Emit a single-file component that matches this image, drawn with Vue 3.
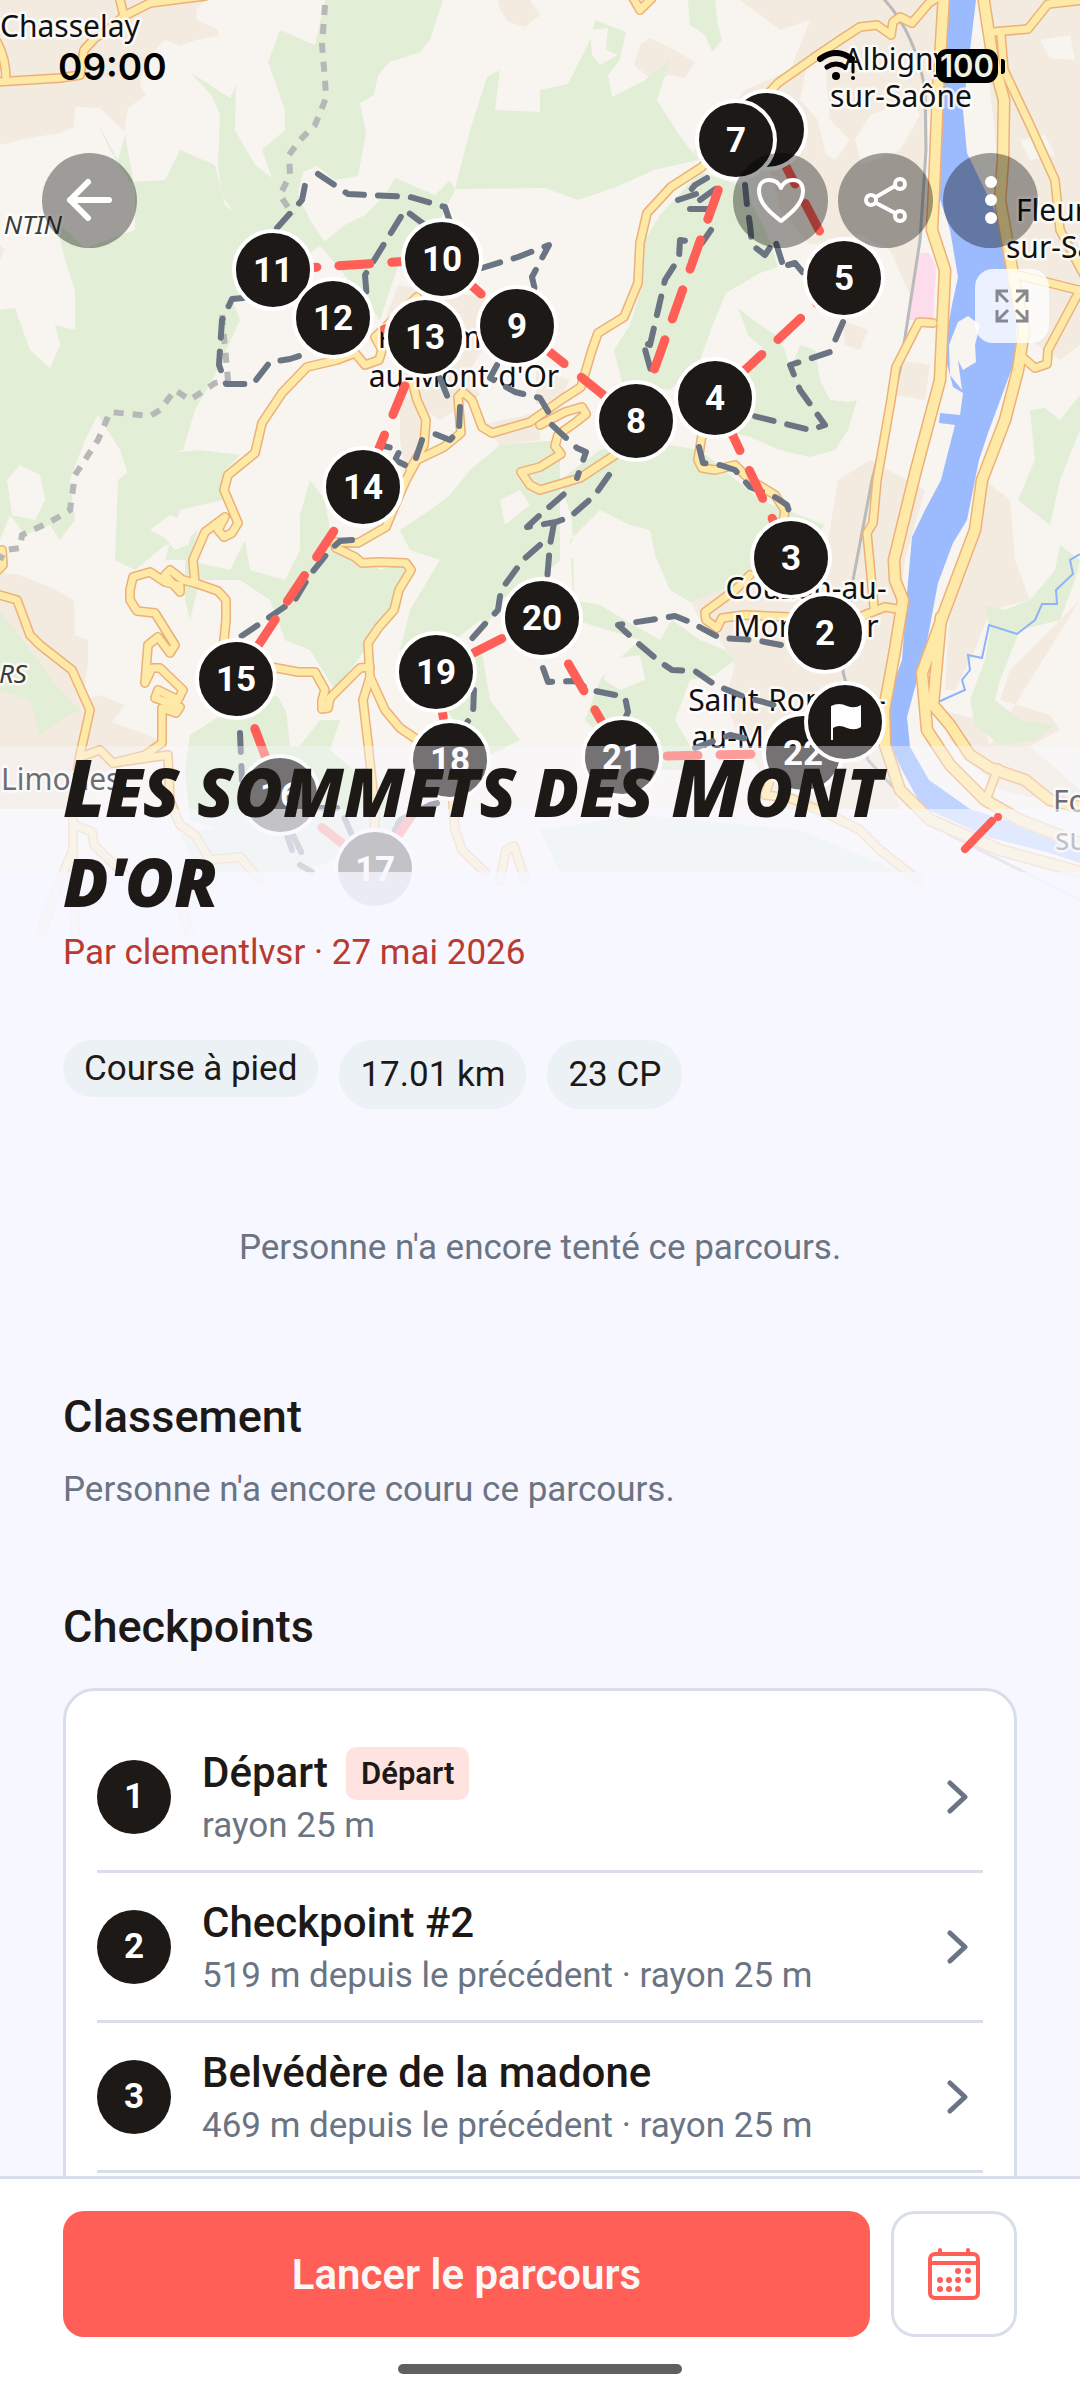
<template>
  <div class="screen">
    <main class="scroll">
      <svg class="map" viewBox="0 0 1080 935" preserveAspectRatio="xMidYMin slice" aria-label="Carte du parcours">
        <rect width="1080" height="935" fill="#f8f5f0" />
        <polygon v-for="(p, i) in urban" :key="'u' + i" :points="p" fill="#f3ebe0" />
        <polygon v-for="(p, i) in clearings" :key="'c' + i" :points="p" fill="#f8f5f0" />
        <polygon v-for="(p, i) in woods" :key="'w' + i" :points="p" fill="#e2eed5" />
        <polygon v-for="(p, i) in glades" :key="'g' + i" :points="p" fill="#f8f5f0" />
        <polygon points="919,253 929,253 936,266 933,320 908,320 914,280" fill="#fddcec" />
        <polygon :points="river" fill="#9cbbff" />
        <polygon points="958,322 968,316 980,325 975,345 976,362 963,370 958,360 962,390 950,375 949,345" fill="#f8f5f0" />
        <path d="M1080 554 L1070 560 L1073 574 L1056 590 L1057 604 L1042 604 L1035 620 L1017 634 L989 625 L982 658 L968 655 L970 670 L962 680 L965 690 L938 702" fill="none" stroke="#8fb2fb" stroke-width="2" />
        <path d="M880 -5 Q915 30 925 90 L926 150 L920 240 L900 370 L872 480 L853 580 L843 672 L868 760 L905 800 L950 835 L1080 900" fill="none" stroke="#b9babb" stroke-width="3" />
        <g fill="none" stroke-linejoin="round" stroke-linecap="round">
          <path v-for="(d, i) in roads" :key="'rc' + i" :d="d" stroke="#ecb178" stroke-width="10" />
          <path v-for="(d, i) in mainRoads" :key="'mc' + i" :d="d" stroke="#ecb178" stroke-width="13" />
          <path v-for="(d, i) in roads" :key="'rf' + i" :d="d" stroke="#ffe9a6" stroke-width="7" />
          <path v-for="(d, i) in mainRoads" :key="'mf' + i" :d="d" stroke="#ffe9a6" stroke-width="10" />
        </g>
        <g fill="none" stroke="#b6b7b7" stroke-width="6" stroke-dasharray="10 9">
          <path d="M325 5 L322 45 L325 80 L326 98 L315 125 L300 140 L289 155 L290 175 L280 195 L293 215" />
          <path d="M222 315 L228 380 L215 383 L190 400 L175 390 L160 410 L150 416 L110 412 L98 440 L75 475 L70 510 L50 522 L22 535 L20 548 L5 550 L0 560" />
        </g>

        <g class="labels">
          <text v-for="l in labels" :key="l.text + l.y" :x="l.x" :y="l.y" :text-anchor="l.anchor || 'start'" :class="{ area: l.area }">{{ l.text }}</text>
        </g>

        <g fill="none" stroke="#6b7483" stroke-width="6" stroke-linecap="round" stroke-linejoin="round" stroke-dasharray="19 14">
          <path v-for="(d, i) in trails" :key="'t' + i" :d="d" />
        </g>
        <g stroke="#ff5f57" stroke-width="9" stroke-linecap="round" stroke-dasharray="31 22">
          <line v-for="(l, i) in legs" :key="'l' + i" :x1="l.x1" :y1="l.y1" :x2="l.x2" :y2="l.y2" :stroke-dashoffset="l.offset" />
        </g>

        <g v-for="p in pins" :key="p.id">
          <circle :cx="p.x" :cy="p.y" r="39" fill="#1d1916" stroke="#fff" stroke-width="4" />
          <path v-if="p.id === 'flag'" transform="translate(845 722)" d="M-14 18 V-16 Q-6 -20 2 -16 Q10 -13 16 -17 V5 Q10 9 2 6 Q-6 2 -12 6 V18 Z" fill="#fff" />
          <text v-else class="pin-num" :x="p.x" :y="p.y + 12" text-anchor="middle">{{ p.label }}</text>
        </g>

        <g fill="#f7f7ff">
          <rect y="746" width="1080" height="63" opacity="0.4" />
          <rect y="809" width="1080" height="63" opacity="0.76" />
          <rect y="872" width="1080" height="63" opacity="0.95" />
        </g>
        <path d="M965 849 L992 821" stroke="#ff5f57" stroke-width="8" stroke-linecap="round" />
        <circle cx="998" cy="817" r="4" fill="#ff5f57" />
      </svg>

      <div class="over-map">
        <div class="status">
          <span class="clock">09:00</span>
          <span class="status-right">
            <svg width="42" height="32" viewBox="0 0 42 32" fill="none" stroke="#000" stroke-linecap="round" aria-hidden="true">
              <path d="M3 9 Q19 -3 35 9" stroke-width="6" />
              <path d="M10 17 Q19 11 28 17" stroke-width="5" />
              <circle cx="19" cy="26" r="4" fill="#000" stroke="none" />
              <path d="M36 14 V22" stroke-width="3" />
              <circle cx="36" cy="28" r="2" fill="#000" stroke="none" />
            </svg>
            <span class="battery"><span class="level">100</span><i></i></span>
          </span>
        </div>

        <nav class="nav">
          <button class="round" type="button" aria-label="Retour">
            <svg width="52" height="52" viewBox="0 0 52 52"><path d="M45 25 H6 M24 7 L6 25 L24 43" stroke-width="6" /></svg>
          </button>
          <div class="actions">
            <button class="round" type="button" aria-label="Favori">
              <svg width="52" height="52" viewBox="0 0 52 52"><path d="M26 46 C17 39 4 29 4 16 C4 8 9 5 14 5 C20 5 24 8 26 13 C28 8 32 5 38 5 C43 5 48 8 48 16 C48 29 35 39 26 46 Z" stroke-width="4" /></svg>
            </button>
            <button class="round" type="button" aria-label="Partager">
              <svg width="52" height="52" viewBox="0 0 52 52" stroke-width="4">
                <path d="M16 22 L35 11 M16 28 L35 38" />
                <circle cx="11" cy="25" r="5" /><circle cx="40" cy="9" r="5" /><circle cx="40" cy="41" r="5" />
              </svg>
            </button>
            <button class="round" type="button" aria-label="Plus d'options">
              <svg class="dots" width="52" height="52" viewBox="0 0 52 52">
                <circle cx="26" cy="7" r="6" /><circle cx="26" cy="25" r="6" /><circle cx="26" cy="43" r="6" />
              </svg>
            </button>
          </div>
        </nav>
        <button class="expand" type="button" aria-label="Agrandir la carte">
          <svg width="34" height="34" viewBox="0 0 34 34" fill="none" stroke="#85898f" stroke-width="3">
            <path d="M2 13 V2 H13 M2 2 L13 13 M21 2 H32 V13 M32 2 L21 13 M2 21 V32 H13 M2 32 L13 21 M32 21 V32 H21 M32 32 L21 21" />
          </svg>
        </button>
      </div>

      <div class="content">
        <h1><span>L</span>es sommets des <span>M</span>ont d'or</h1>
        <p class="author">Par clementlvsr · 27 mai 2026</p>

        <div class="chips">
          <span class="chip sport">Course à pied</span>
          <span class="chip">17.01 km</span>
          <span class="chip">23 CP</span>
        </div>

        <p class="empty">Personne n'a encore tenté ce parcours.</p>

        <section class="block">
          <h2>Classement</h2>
          <p class="muted">Personne n'a encore couru ce parcours.</p>
        </section>

        <section class="block">
          <h2>Checkpoints</h2>
          <div class="card">
            <a v-for="(cp, i) in checkpoints" :key="cp.name" class="cp" href="#">
              <span class="num">{{ i + 1 }}</span>
              <span class="info">
                <span class="name">{{ cp.name }}<span v-if="cp.badge" class="badge">{{ cp.badge }}</span></span>
                <span class="detail">{{ cp.detail }}</span>
              </span>
              <svg class="chevron" width="36" height="36" viewBox="0 0 36 36" aria-hidden="true"><path d="M3 4 L18 18 L3 32" /></svg>
            </a>
          </div>
        </section>
      </div>
    </main>

    <footer class="bottom">
      <div class="cta">
        <button class="start" type="button">Lancer le parcours</button>
        <button class="calendar" type="button" aria-label="Planifier">
          <svg width="54" height="54" viewBox="0 0 54 54" fill="none" stroke="#ff5f57" stroke-width="4" stroke-linecap="round">
            <rect x="3" y="7" width="48" height="44" rx="5" />
            <path d="M3 16 H51 M13 3 V6 M41 3 V6" />
            <g fill="#ff5f57" stroke="none">
              <circle v-for="(d, i) in calendarDots" :key="i" :cx="d[0]" :cy="d[1]" r="3" />
            </g>
          </svg>
        </button>
      </div>
      <div class="handle"></div>
    </footer>
  </div>
</template>

<script setup>
import { ref, computed } from 'vue';

const checkpoints = ref([
  { name: 'Départ', badge: 'Départ', detail: 'rayon 25 m' },
  { name: 'Checkpoint #2', detail: '519 m depuis le précédent · rayon 25 m' },
  { name: 'Belvédère de la madone', detail: '469 m depuis le précédent · rayon 25 m' }
]);

const calendarDots = [[31, 24], [41, 24], [13, 33], [22, 33], [31, 33], [41, 33], [13, 42], [22, 42], [31, 42]];

// drawing order matters: later pins cover earlier ones
const pins = [
  { id: 6, label: '', x: 767, y: 130 },
  { id: 7, label: '7', x: 736, y: 140 },
  { id: 5, label: '5', x: 844, y: 278 },
  { id: 4, label: '4', x: 715, y: 398 },
  { id: 8, label: '8', x: 636, y: 421 },
  { id: 3, label: '3', x: 791, y: 558 },
  { id: 2, label: '2', x: 825, y: 633 },
  { id: 9, label: '9', x: 517, y: 326 },
  { id: 10, label: '10', x: 442, y: 259 },
  { id: 11, label: '11', x: 273, y: 270 },
  { id: 12, label: '12', x: 333, y: 318 },
  { id: 13, label: '13', x: 425, y: 337 },
  { id: 14, label: '14', x: 363, y: 487 },
  { id: 15, label: '15', x: 236, y: 679 },
  { id: 16, label: '16', x: 280, y: 795 },
  { id: 17, label: '17', x: 375, y: 869 },
  { id: 18, label: '18', x: 450, y: 760 },
  { id: 19, label: '19', x: 436, y: 672 },
  { id: 20, label: '20', x: 542, y: 618 },
  { id: 21, label: '21', x: 622, y: 757 },
  { id: 22, label: '22', x: 803, y: 753 },
  { id: 'flag', label: '', x: 845, y: 722 }
];

// [from, to, dash offset]
const links = [
  [3, 4, 40], [4, 5, 20], [5, 6, 0], [7, 8, 0], [8, 9, 14], [9, 10, 5], [11, 10, 40], [12, 13, 0], [13, 14, 0],
  [14, 15, 0], [15, 16, 0], [16, 17, 0], [17, 18, 10], [18, 19, 10], [19, 20, 10], [20, 21, 0], [21, 22, 8]
];

const legs = computed(() => links.map(([a, b, offset]) => {
  const from = pins.find(p => p.id === a);
  const to = pins.find(p => p.id === b);
  return { x1: from.x, y1: from.y, x2: to.x, y2: to.y, offset };
}));

const labels = [
  { text: 'Chasselay', x: 0, y: 37 },
  { text: 'NTIN', x: 62, y: 234, anchor: 'end', area: true },
  { text: 'RS', x: 27, y: 683, anchor: 'end', area: true },
  { text: 'Limonest', x: 1, y: 790 },
  { text: 'Poleymieux-', x: 464, y: 348, anchor: 'middle' },
  { text: "au-Mont-d'Or", x: 464, y: 387, anchor: 'middle' },
  { text: 'Albigny-', x: 901, y: 70, anchor: 'middle' },
  { text: 'sur-Saône', x: 901, y: 107, anchor: 'middle' },
  { text: 'Fleurieu-', x: 1016, y: 221 },
  { text: 'sur-Saône', x: 1006, y: 258 },
  { text: 'Couzon-au-', x: 806, y: 599, anchor: 'middle' },
  { text: "Mont-d'Or", x: 806, y: 637, anchor: 'middle' },
  { text: 'Saint-Romain-', x: 787, y: 711, anchor: 'middle' },
  { text: "au-Mont-d'Or", x: 787, y: 748, anchor: 'middle' },
  { text: 'Fontaines-', x: 1053, y: 812 },
  { text: 'sur-Saône', x: 1055, y: 850 }
];

const urban = [
  '0,0 205,0 196,10 197,20 218,30 218,36 196,40 180,46 165,40 145,60 140,85 146,95 128,108 124,131 100,108 75,107 74,127 60,133 30,138 0,145',
  '498,0 530,0 540,15 525,27 508,22 500,10',
  '640,45 650,38 675,50 695,62 685,78 668,75 655,82 634,65',
  '740,0 940,0 928,120 925,220 912,300 890,250 860,235 810,245 780,210 770,170 700,160 690,155 745,90 790,70 810,20 780,30',
  '985,0 1080,0 1080,345 1060,360 1030,340 1015,260 1000,180 990,90',
  '398,285 440,290 500,300 495,330 470,370 480,395 440,420 410,400 395,350 385,320',
  '400,390 420,410 428,440 405,470 400,440',
  '480,425 540,412 540,440 500,445',
  '536,370 570,380 560,398 536,405',
  '842,320 868,330 860,350 845,345',
  '0,572 20,575 52,588 74,600 75,635 88,640 88,665 82,700 100,695 125,705 112,722 160,740 150,757 80,780 70,809 0,809',
  '838,480 870,460 925,490 905,560 895,640 880,746 900,809 780,809 760,770 740,740 725,700 735,665 720,640 700,620 690,600 745,580 790,600 820,590',
  '900,360 930,365 925,400 895,395',
  '985,480 1010,500 1015,560 1030,600 990,610 975,650 955,690 945,690 950,600 970,530',
  '1080,600 1040,640 1010,670 1000,700 1050,715 1060,730 1030,746 1080,790 1080,809 1000,790 950,740 940,710 980,720 990,745',
  '0,245 5,250 0,260'
];

const clearings = [
  '808,60 825,62 830,120 850,140 835,160 820,150 826,155 818,120 800,100',
  '870,115 910,100 920,115 900,150 862,165 855,140',
  '1020,140 1045,135 1055,155 1030,160',
  '1040,40 1070,35 1075,60 1050,58',
  '745,470 790,450 838,470 830,530 790,520'
];

const woods = [
  '325,0 443,0 430,40 420,52 390,62 378,75 374,95 360,103 366,133 358,176 335,180 317,166 303,172 298,195 310,220 330,250 300,240 270,225 240,222 222,195 218,165 220,115 212,96 190,72 230,98 236,85 235,130 255,165 272,178 262,150 285,130 285,110 268,62 280,30 315,45',
  '97,122 110,150 130,182 165,180 180,150 215,165 225,205 245,222 290,225 300,235 320,245 270,290 250,300 232,300 240,320 215,375 195,410 183,450 148,460 130,480 120,450 98,415 85,440 70,480 50,490 0,490 0,310 15,308 30,350 50,368 60,345 55,325 75,330 75,290 65,260 55,220 85,248 135,230 135,190 125,135 118,160',
  '395,178 435,195 450,180 455,190 440,220 400,260 380,320 365,300 320,245 345,225 365,215 385,195',
  '487,77 500,70 495,110 540,112 540,90 568,84 590,40 595,20 626,32 620,60 608,75 612,97 645,80 670,60 657,100 678,133 698,160 654,170 616,187 578,200 545,188 455,189 470,130',
  '688,0 715,0 718,25 722,40 712,52 705,35 690,25',
  '700,172 740,185 752,205 767,233 778,267 760,273 726,293 712,327 700,360 670,390 622,383 614,350 630,325 643,283 645,240 660,215 674,200',
  '738,308 760,325 775,335 785,350 790,370 800,345 815,350 820,380 830,400 848,402 857,400 848,430 835,450 810,457 780,450 750,437 720,430 740,400 750,365 765,350 748,335',
  '560,480 600,450 640,440 700,450 760,500 825,525 812,540 760,545 750,580 720,590 690,602 670,590 655,555 650,530 630,525 600,510 570,540 573,600 600,605 625,620 660,640 672,620 700,640 725,650 735,660 715,675 690,680 675,720 690,746 700,770 660,770 600,735 585,720 600,680 612,665 640,640 575,620 572,520',
  '400,530 430,510 450,495 470,470 500,445 560,440 560,560 540,580 500,600 480,640 490,700 520,740 480,760 440,700 410,690 400,650 410,610 440,560 410,550',
  '310,480 325,500 330,530 345,545 380,570 405,560 400,600 380,620 365,650 335,690 310,650 285,640 270,600 240,580 200,580 190,620 185,600 185,560 230,570 245,540 250,570 285,580 300,550 300,515',
  '118,480 150,455 200,450 240,455 225,470 222,500 180,510 165,560 190,560 198,530 180,545 165,545 135,570 115,560',
  '190,735 230,710 260,690 285,700 290,746 300,746 320,720 340,720 330,750 400,810 390,840 290,850 190,820 185,770',
  '0,460 70,480 75,520 60,540 50,525 25,535 10,515 0,540',
  '0,610 30,650 60,690 80,710 60,720 40,735 30,700 0,690',
  '1030,410 1045,408 1060,420 1080,395 1080,430 1060,480 1050,525 1018,500 1035,460',
  '985,605 1005,610 1030,600 1055,570 1060,545 1080,560 1075,580 1060,620 1020,630 1000,680 995,700 1020,720 1055,725 1035,740 1000,745 975,725 970,700 985,660 990,630',
  '180,835 260,820 380,845 300,872 200,872',
  '540,830 640,815 800,830 900,872 560,872'
];

const glades = [
  '7,480 20,465 40,475 45,500 35,520 12,515',
  '150,530 170,515 195,525 188,545 175,550 165,538',
  '305,430 350,410 360,450 330,470',
  '265,670 300,690 310,715 290,720',
  '590,30 608,28 606,50 618,55 600,65 592,55',
  '500,500 520,490 530,505 505,525',
  '572,540 590,550 580,565 568,555',
  '455,640 480,620 490,630 470,660',
  '608,660 640,655 645,680 620,690 604,680'
];

const river = '949,0 943,43 938,110 936,187 950,230 958,277 952,305 948,327 946,360 953,387 963,393 960,415 940,413 939,423 955,425 941,480 925,510 912,537 907,593 902,660 890,693 889,743 902,770 922,807 988,837 1050,853 1080,863 1080,843 1020,825 970,809 929,780 910,747 907,717 926,647 938,583 953,543 967,520 979,460 988,433 1015,360 1017,317 1012,260 998,217 967,153 963,110 972,33 976,0';

const roads = [
  'M119 -4 L124 16 L150 3 L205 -4',
  'M124 16 L108 30 L95 38 L84 50 L80 75 L60 78 L-4 82 M-3 42 Q6 58 6 80',
  'M940 -4 L929 3 L912 23 L900 17 L893 22 L891 35 L877 25 L860 27 L840 40 L815 57 L778 83 L702 167 L671 187 L647 213 L640 243 L638 283 L624 317 L598 333 L592 350 L581 387 L561 400 L530 422 L492 433 L482 427 L472 400 L463 392 L458 397 L461 433 L444 447 L417 460 L406 480 L396 503 L386 527 L358 543 L334 542 L336 548 L355 557 L362 563 L379 562 L406 563 L411 570 L399 590 L394 610 L379 627 L368 643 L370 677 L363 700 L368 743 L375 810 L374 840',
  'M370 677 L385 710 L400 728 L440 755 L452 790 L455 830 L462 850 L485 872 M500 880 L506 850 L514 846 L525 880',
  'M370 667 L360 668 L330 698 L328 708 L322 709 L322 700 L325 690 L315 672 L298 672 L250 663',
  'M223 650 L226 620 L226 600 L218 591 L195 583 L183 580 L170 570 L165 575 L180 592 L180 586 L165 582 L150 572 L133 577 L130 590 L130 600 L137 611 L155 613 L175 645 L170 653 L158 637 L148 645 L145 683 L152 668 L160 668 L183 690 L178 700 L158 690 L155 698 L180 707 L176 713 L162 708 L162 743 L145 755 L113 763 L100 750 L80 757',
  'M195 583 L193 560 L205 532 L225 517 L218 530 L224 537 L232 533 L238 523 L224 490 L228 475 L255 453 L262 423 L282 393 L307 367 L337 360 L355 353 L365 365 L379 360 L382 350 L375 337 L417 297',
  'M412 380 L417 400 L426 420 L424 445 L410 470',
  'M-4 594 L17 600 L30 635 L40 645 L72 670 L90 710 L80 755 L73 800 L73 850 L60 880',
  'M76 825 L92 832 L94 845 L130 880',
  'M113 763 L168 755 L170 800 L180 825 L195 835 L210 860 L240 857 L260 880',
  'M-4 572 L3 565 L2 550',
  'M540 425 L565 412 L582 407 L586 414 L576 422 L558 435 L555 446 L561 454 L540 467 L521 472 L530 485 L540 490 L580 478 L615 455',
  'M702 435 L698 460 L702 468 L715 470 L735 465 L750 480 L775 495 L785 510 L782 530',
  'M750 575 L735 590 L705 612 L706 620 L717 628 L722 618 L745 615 L790 617',
  'M770 780 L765 795 L790 798 L830 815 L860 830 L880 850 L918 880',
  'M632 -4 L640 10 L652 -2',
  'M862 616 L885 607 L903 610',
  'M933 323 L919 322 L896 367 L891 400 L877 480 L873 523 L867 533 L874 607',
  'M993 32 L1028 29 L1048 4 L1084 0',
  'M1001 35 L1004 70 L1030 125 L1055 180 L1060 230 L1084 275',
  'M1018 275 L1078 290 M1080 290 L1048 350 L1047 364 L1035 368 L1020 355',
  'M998 768 L988 795',
  'M60 880 L40 935 M73 850 L75 935 M130 880 L180 900 L190 935'
];

const mainRoads = [
  'M944 -5 L938 90 L934 190 L932 230 L945 270 L940 380 L916 470 L894 560 L895 580 L903 600 L895 650 L884 710 L885 745 L900 790 L930 820 L1000 850 L1084 873',
  'M983 -5 L993 60 L1004 100 L1003 160 L1000 200 L1014 280 L1024 330 L1018 370 L1005 420 L982 480 L975 530 L945 610 L922 673 L927 730 L950 765 L985 800 L1020 820 L1084 845',
  'M941 617 L938 650 L933 705 L950 725 L970 755 L990 768 L1025 780 L1050 800 L1084 808'
];

const trails = [
  'M277 228 L302 200 L306 180',
  'M318 174 L348 194 L410 197 L445 207 L450 222',
  'M425 225 L405 210 L365 275 L367 300',
  'M243 298 L232 299 L222 320 L219 365 L226 384 L253 384 L270 362 L290 359 L312 352',
  'M482 268 L518 257 L549 245 L532 277 L535 290',
  'M497 365 L490 378 L515 392 L540 398 L549 413 L552 425 L577 448 L586 452 L577 478',
  'M440 378 L448 398 M460 407 L459 430 L450 440 L430 432 M422 440 L416 458 M405 465 L395 460 L400 450 L380 445',
  'M609 475 L595 495 L570 517 L556 522 L527 527 L540 515 L571 488 M554 523 L550 545 L547 580',
  'M540 545 L523 560 L501 590 L498 610 L484 625 L468 643',
  'M352 540 L340 541 L330 550 L310 575 L295 600 L280 610 L255 627 L240 637',
  'M240 733 L241 757 L242 780',
  'M318 808 L340 808 L352 835 M287 835 L292 850 M293 835 L305 860 M300 865 L312 872 M395 830 L400 820 L430 805 L448 800',
  'M474 690 L473 715 L465 725',
  'M543 668 L548 682 L575 681 L590 690 L625 697 L628 712 L622 725 L590 735',
  'M707 178 L695 185 L686 196 M678 200 L702 192 M690 209 L708 209 M700 200 L718 187',
  'M711 230 L702 243 L680 240 L679 258 L665 280 L650 345 L643 342 L652 375',
  'M745 185 L747 205 L750 225 L752 245 L765 255 L775 240 L782 262 M788 265 L795 263 L805 275',
  'M843 322 L830 352 L800 362 L790 365 L800 390 L825 425 L810 430 L750 415',
  'M699 447 L703 463 L720 465 L735 470 L750 487 L775 497 L787 505 L792 520',
  'M781 645 L755 640 L720 638 L690 622 L675 616 L618 625 L640 645 L660 662 L672 670 L695 671 L715 685 L745 697 L785 708',
  'M695 748 L730 735 L756 741'
];
</script>

<style>
body {
  margin: 0;
  background: #f7f7ff;
}
</style>

<style scoped>
.screen {
  display: flex;
  flex-direction: column;
  height: 100vh;
  background: #f7f7ff;
  color: #1d1916;
  font-family: Roboto, sans-serif;
}

.scroll {
  position: relative;
  flex: 1;
  min-height: 0;
  overflow-y: auto;
  scrollbar-width: none;
}

button {
  border: 0;
  padding: 0;
  font-family: inherit;
  cursor: pointer;
}

h1,
h2,
p {
  margin: 0;
}

/* Map background */
.map {
  position: absolute;
  top: 0;
  left: 0;
  width: 100%;
  height: 935px;
}

.labels text {
  font-family: "Noto Sans", sans-serif;
  font-size: 30px;
  fill: #111;
  stroke: #fff;
  stroke-opacity: 0.8;
  stroke-width: 5px;
  stroke-linejoin: round;
  paint-order: stroke;
}

.labels .area {
  font-size: 26px;
  font-style: italic;
  fill: #3c3c3c;
}

.pin-num {
  font-size: 35px;
  font-weight: 700;
  fill: #fff;
}

.over-map {
  position: relative;
  display: flex;
  flex-direction: column;
  height: 746px;
}

.status {
  display: flex;
  justify-content: space-between;
  align-items: center;
  height: 132px;
  padding: 0 75px 0 58px;
  color: #000;
  font-family: Inter, sans-serif;
  font-weight: 600;
}

.clock {
  font-size: 37px;
}

.status-right {
  display: flex;
  align-items: center;
  gap: 77px;
}

.battery {
  display: flex;
  align-items: center;
  gap: 3px;
}

.level {
  padding: 0 4px;
  border-radius: 11px;
  background: #000;
  color: #eef1e4;
  font-size: 31px;
  font-weight: 600;
  line-height: 34px;
}

.battery i {
  width: 4px;
  height: 15px;
  border-radius: 0 3px 3px 0;
  background: #000;
}

.nav {
  display: flex;
  justify-content: space-between;
  padding: 21px 42px;
}

.actions {
  display: flex;
  gap: 10px;
}

.round {
  display: flex;
  align-items: center;
  justify-content: center;
  width: 95px;
  height: 95px;
  border-radius: 50%;
  background: rgba(0, 0, 0, 0.36);
}

.round svg {
  fill: none;
  stroke: #fff;
  stroke-linecap: round;
  stroke-linejoin: round;
}

.round .dots {
  fill: #fff;
  stroke: none;
}

.expand {
  display: flex;
  align-items: center;
  justify-content: center;
  align-self: flex-end;
  width: 74px;
  height: 74px;
  margin-right: 31px;
  border-radius: 18px;
  background: rgba(255, 255, 255, 0.8);
}

/* Course details */
.content {
  position: relative;
  padding: 0 63px 63px;
}

h1 {
  font-family: "Permanent Marker", "Open Sans", sans-serif;
  font-size: 67px;
  font-style: italic;
  font-weight: 800;
  line-height: 90px;
  text-transform: uppercase;
}

h1 span {
  font-size: 80px;
  line-height: 60px;
}

.author {
  margin-top: 5px;
  color: #b83a30;
  font-size: 35px;
  line-height: 44px;
}

.chips {
  display: flex;
  align-items: flex-start;
  gap: 21px;
  margin-top: 65px;
}

.chip {
  padding: 12px 21px;
  border-radius: 34px;
  background: #ebf1f5;
  font-size: 35px;
  line-height: 45px;
}

.sport {
  padding: 6px 21px;
}

.empty {
  margin-top: 116px;
  color: #6b7483;
  font-size: 35px;
  line-height: 46px;
  text-align: center;
}

.block {
  margin-top: 116px;
}

.block + .block {
  margin-top: 84px;
}

h2 {
  font-size: 45px;
  font-weight: 500;
  line-height: 60px;
}

.muted {
  margin-top: 20px;
  color: #6b7483;
  font-size: 35px;
  line-height: 46px;
}

.card {
  margin-top: 31px;
  padding: 32px 31px;
  border: 3px solid #d9dfea;
  border-radius: 32px;
  background: #fff;
}

.cp {
  display: flex;
  align-items: center;
  gap: 31px;
  padding: 21px 0;
  border-bottom: 3px solid #d9dfea;
  color: inherit;
  text-decoration: none;
}

.num {
  width: 74px;
  border-radius: 50%;
  background: #1d1916;
  color: #fff;
  font-size: 35px;
  font-weight: 700;
  line-height: 74px;
  text-align: center;
}

.info {
  display: flex;
  flex: 1;
  flex-direction: column;
}

.name {
  display: flex;
  align-items: center;
  gap: 18px;
  font-size: 42px;
  font-weight: 500;
  line-height: 58px;
}

.badge {
  padding: 0 15px;
  border-radius: 10px;
  background: #ffe3e0;
  font-size: 31px;
  font-weight: 600;
  line-height: 53px;
}

.detail {
  color: #6b7483;
  font-size: 35px;
  line-height: 47px;
}

.chevron {
  fill: none;
  stroke: #6b7483;
  stroke-width: 5;
  stroke-linecap: round;
  stroke-linejoin: round;
}

/* Bottom bar */
.bottom {
  border-top: 3px solid #d9dfea;
  background: #fff;
}

.cta {
  display: flex;
  gap: 21px;
  padding: 32px 63px 27px;
}

.start {
  flex: 1;
  height: 126px;
  border-radius: 21px;
  background: #ff5f57;
  color: #fdf7f5;
  font-size: 42px;
  font-weight: 600;
}

.calendar {
  display: flex;
  align-items: center;
  justify-content: center;
  width: 126px;
  height: 126px;
  box-sizing: border-box;
  border: 3px solid #d9dfea;
  border-radius: 24px;
  background: #fff;
}

.handle {
  width: 284px;
  height: 10px;
  margin: 0 auto 26px;
  border-radius: 5px;
  background: #606060;
}
</style>
